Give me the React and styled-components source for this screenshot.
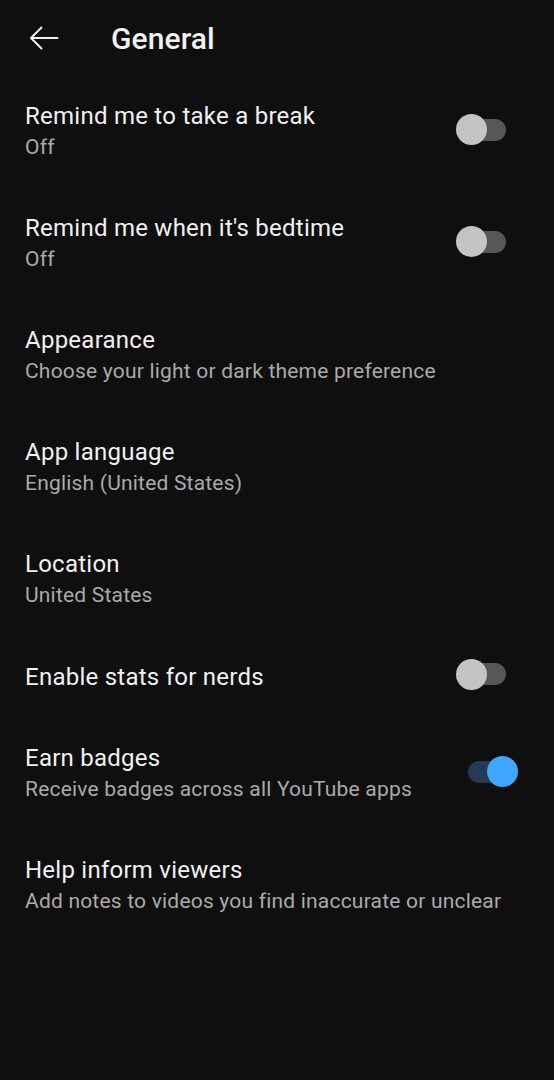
import React from 'react';
import styled, { createGlobalStyle } from 'styled-components';

const GlobalStyle = createGlobalStyle`
  html, body {
    margin: 0;
    padding: 0;
    background: #0f0f0f;
  }
  body {
    font-family: Roboto, "Noto Sans", "Liberation Sans", sans-serif;
    color: #f1f1f1;
    -webkit-font-smoothing: antialiased;
  }
`;

const Screen = styled.div`
  width: 554px;
  min-height: 1080px;
  background: #0f0f0f;
`;

const Header = styled.header`
  height: 78px;
  display: flex;
  align-items: center;
  padding-left: 29px;
`;

const BackButton = styled.button`
  width: 30px;
  height: 30px;
  padding: 0;
  border: none;
  background: none;
  display: flex;
  align-items: center;
  justify-content: center;
  margin-top: -2px;
  cursor: pointer;
`;

const HeaderTitle = styled.h1`
  margin: 0 0 0 52px;
  font-size: 30px;
  font-weight: 500;
  line-height: 78px;
  color: #f1f1f1;
  letter-spacing: 0.1px;
`;

const List = styled.div`
  display: flex;
  flex-direction: column;
`;

const Row = styled.div`
  display: flex;
  align-items: center;
  padding: ${({ $single }) => ($single ? '0 36px 4px 25px' : '23px 36px 26px 25px')};
  min-height: ${({ $single }) => ($single ? '82px' : '0')};
  box-sizing: border-box;
`;

const Texts = styled.div`
  flex: 1;
  display: flex;
  flex-direction: column;
`;

const Title = styled.div`
  font-size: 24px;
  line-height: 30px;
  letter-spacing: 0.25px;
  color: #f1f1f1;
`;

const Subtitle = styled.div`
  font-size: 21px;
  line-height: 33px;
  letter-spacing: 0.2px;
  color: #aaaaaa;
`;

const Switch = styled.div`
  position: relative;
  width: 62px;
  height: 31px;
  margin-bottom: 6px;
  flex-shrink: 0;
`;

const Track = styled.div`
  position: absolute;
  left: 12px;
  top: 4.5px;
  width: 38px;
  height: 22px;
  border-radius: 11px;
  background: ${({ $on }) => ($on ? '#263a55' : '#575757')};
`;

const Thumb = styled.div`
  position: absolute;
  top: 0;
  left: ${({ $on }) => ($on ? '31px' : '0')};
  width: 31px;
  height: 31px;
  border-radius: 50%;
  background: ${({ $on }) => ($on ? '#3ea6ff' : '#c4c4c4')};
`;

const Toggle = ({ on }) => (
  <Switch>
    <Track $on={on} />
    <Thumb $on={on} />
  </Switch>
);

const settings = [
  { title: 'Remind me to take a break', sub: 'Off', toggle: false },
  { title: "Remind me when it's bedtime", sub: 'Off', toggle: false },
  { title: 'Appearance', sub: 'Choose your light or dark theme preference' },
  { title: 'App language', sub: 'English (United States)' },
  { title: 'Location', sub: 'United States' },
  { title: 'Enable stats for nerds', toggle: false },
  { title: 'Earn badges', sub: 'Receive badges across all YouTube apps', toggle: true },
  { title: 'Help inform viewers', sub: 'Add notes to videos you find inaccurate or unclear' },
];

const BackArrow = () => (
  <svg width="30" height="24" viewBox="0 0 30 24" fill="none">
    <path
      d="M28.5 12H2M12.5 1.5L2 12l10.5 10.5"
      stroke="#f1f1f1"
      strokeWidth="2"
      strokeLinecap="round"
      strokeLinejoin="round"
    />
  </svg>
);

const App = () => {
  return (
    <Screen>
      <GlobalStyle />
      <Header>
        <BackButton aria-label="Back">
          <BackArrow />
        </BackButton>
        <HeaderTitle>General</HeaderTitle>
      </Header>
      <List>
        {settings.map((s) => (
          <Row key={s.title} $single={!s.sub}>
            <Texts>
              <Title>{s.title}</Title>
              {s.sub && <Subtitle>{s.sub}</Subtitle>}
            </Texts>
            {s.toggle !== undefined && <Toggle on={s.toggle} />}
          </Row>
        ))}
      </List>
    </Screen>
  );
};

export default App;
